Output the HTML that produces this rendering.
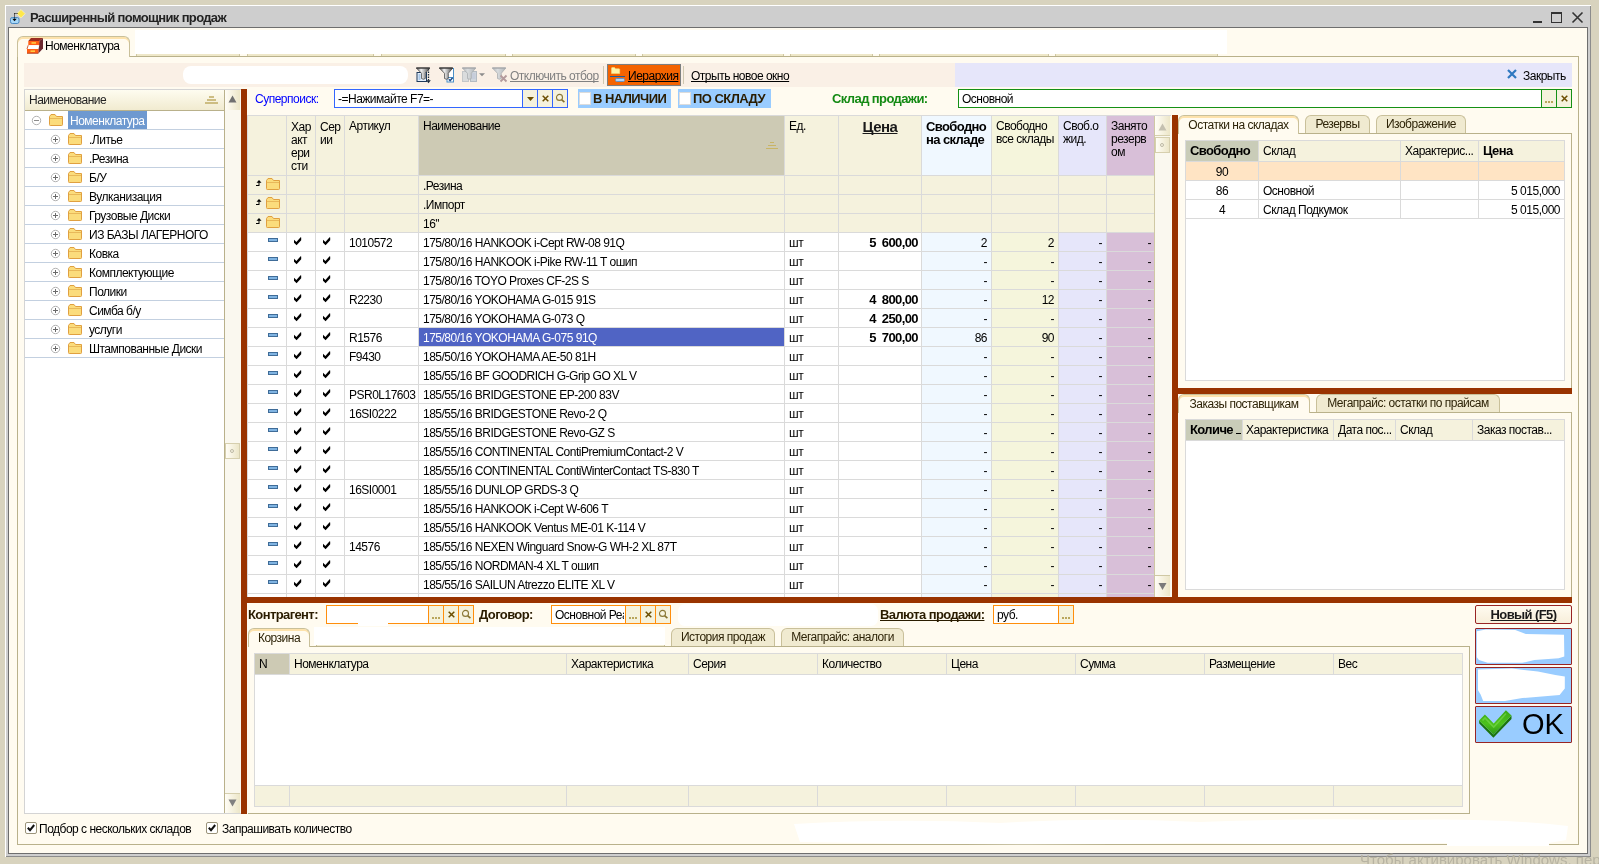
<!DOCTYPE html>
<html lang="ru"><head><meta charset="utf-8"><title>Расширенный помощник продаж</title>
<style>
html,body{margin:0;padding:0}
body{width:1599px;height:864px;background:#d8d3be;position:relative;overflow:hidden;
 font:12px "Liberation Sans",sans-serif;letter-spacing:-0.5px;color:#000}
div{position:absolute;box-sizing:border-box;text-decoration-skip-ink:none}
.t{white-space:nowrap;line-height:19px;height:19px}
.b{font-weight:bold;font-size:13px;letter-spacing:-0.6px}
.u{text-decoration:underline}
svg{position:absolute;overflow:visible}
.tab{background:#f0ead0;border:1px solid #c9c09a;border-bottom:none;border-radius:6px 6px 0 0;text-align:center;line-height:17px;white-space:nowrap;color:#2e2408}
.tabA{background:#fffbf0;border:1px solid #c9c09a;border-bottom:none;box-shadow:inset 0 2px 0 #fde2ab;border-radius:6px 6px 0 0;text-align:center;white-space:nowrap;color:#2e2408}
.btn{background:#f5f2d8;text-align:center;line-height:14px;color:#7a5a00;font-weight:bold}
#w{left:0;top:0;width:1599px;height:864px;will-change:transform}
</style></head><body><div id="w">

<div style="left:5px;top:5px;width:1586px;height:852px;background:#fff"></div>
<div style="left:6px;top:6px;width:1585px;height:851px;background:#8c8c8c"></div>
<div style="left:6px;top:6px;width:1584px;height:850px;background:#cecece"></div>
<div style="left:8px;top:27px;width:1580px;height:827px;background:#707070"></div>
<div style="left:9px;top:28px;width:1578px;height:825px;background:#fffbf0"></div>
<div style="left:8px;top:27px;width:1580px;height:827px;background:#6e6e6e"></div>
<div style="left:9px;top:28px;width:1578px;height:825px;background:#fffbf0"></div>
<svg style="left:9px;top:8px" width="18" height="18" viewBox="0 0 18 18"><path d="M12 1.500L16.200 5.700L12 9.900L7.800 5.700z" fill="#ffe84a" stroke="#f4f0c8" stroke-width=".8"/><rect x="1.500" y="9.500" width="8.500" height="6" rx="1.800" fill="#a8d8f8" stroke="#4a8ac4"/><path d="M5.500 5.500v6" stroke="#000" stroke-dasharray="1 1"/><path d="M5.500 5.500h3" stroke="#000" stroke-dasharray="1 1"/><path d="M3.300 10.800h4.400L5.500 13.300z" fill="#000"/></svg>
<div class="t" style="left:30px;top:8px;font-weight:bold;font-size:13px;color:#222;letter-spacing:-0.65px">Расширенный помощник продаж</div>
<div style="left:1533px;top:21px;width:9px;height:2px;background:#333"></div>
<div style="left:1551px;top:12px;width:11px;height:11px;border:1px solid #333;border-top:2px solid #333"></div>
<svg style="left:1572px;top:12px" width="11" height="11" viewBox="0 0 11 11"><path d="M.5 .5l10 10M10.5 .5l-10 10" stroke="#333" stroke-width="1.6" fill="none"/></svg>
<div style="left:17px;top:56px;width:1562px;height:789px;border:1px solid #b9b18b;background:#fffbf0"></div>
<div style="left:135px;top:30px;width:1092px;height:24px;background:#fff"></div>
<div style="left:136px;top:54px;width:104px;height:2px;background:#eee7c8;border-left:1px solid #cfc7a2;border-right:1px solid #cfc7a2"></div>
<div style="left:247px;top:54px;width:127px;height:2px;background:#eee7c8;border-left:1px solid #cfc7a2;border-right:1px solid #cfc7a2"></div>
<div style="left:381px;top:54px;width:125px;height:2px;background:#eee7c8;border-left:1px solid #cfc7a2;border-right:1px solid #cfc7a2"></div>
<div style="left:512px;top:54px;width:124px;height:2px;background:#eee7c8;border-left:1px solid #cfc7a2;border-right:1px solid #cfc7a2"></div>
<div style="left:642px;top:54px;width:142px;height:2px;background:#eee7c8;border-left:1px solid #cfc7a2;border-right:1px solid #cfc7a2"></div>
<div style="left:790px;top:54px;width:83px;height:2px;background:#eee7c8;border-left:1px solid #cfc7a2;border-right:1px solid #cfc7a2"></div>
<div style="left:879px;top:54px;width:170px;height:2px;background:#eee7c8;border-left:1px solid #cfc7a2;border-right:1px solid #cfc7a2"></div>
<div style="left:1055px;top:54px;width:163px;height:2px;background:#eee7c8;border-left:1px solid #cfc7a2;border-right:1px solid #cfc7a2"></div>
<div style="left:129px;top:56px;width:1450px;height:1px;background:#b9b18b"></div>
<div style="left:17px;top:36px;width:113px;height:21px;background:#fffbf0;border:1px solid #c9c09a;border-bottom:none;box-shadow:inset 0 2px 0 #fde2ab;border-radius:6px 6px 0 0"></div>
<svg style="left:27px;top:38px" width="16" height="16" viewBox="0 0 16 16"><path d="M1.300 3L4 0H16L12.300 3z" fill="#9a2c20"/><path d="M12.300 3L16 0V10.500L11.300 15.500V11z" fill="#6e2a30"/><rect x="1.300" y="3" width="11" height="4.200" fill="#ff5f14"/><path d="M1.200 7.200H12.300L11.300 11H0z" fill="#fff"/><path d="M1.200 7.200L0 11" stroke="#c03a10" stroke-width=".8"/><rect x="0" y="11" width="11.300" height="4.300" fill="#ff5f14"/><path d="M0 15.300h11.300" stroke="#a83a18" stroke-width=".8"/><rect x="4.500" y="4.300" width="4.500" height="1.300" fill="#ffe44d"/><rect x="3.500" y="12.500" width="4.500" height="1.300" fill="#ffe44d"/></svg>
<div class="t" style="left:45px;top:37px;">Номенклатура</div>
<div style="left:24px;top:63px;width:931px;height:24px;background:#faf0e6"></div>
<div style="left:955px;top:63px;width:617px;height:24px;background:#e6e6fa"></div>
<div style="left:183px;top:66px;width:225px;height:18px;background:#fff;border-radius:8px"></div>
<svg width="0" height="0" style="left:0;top:0"><defs><linearGradient id="fm" x1="0" y1="0" x2="1" y2="0"><stop offset="0" stop-color="#4a4a4a"/><stop offset=".35" stop-color="#f2f2f2"/><stop offset=".6" stop-color="#b5b5b5"/><stop offset="1" stop-color="#3c3c3c"/></linearGradient><linearGradient id="fg" x1="0" y1="0" x2="1" y2="0"><stop offset="0" stop-color="#b4b8bb"/><stop offset=".4" stop-color="#d9dcde"/><stop offset="1" stop-color="#aeb2b5"/></linearGradient></defs></svg>
<svg style="left:416px;top:67px" width="16" height="16" viewBox="0 0 16 16"><rect x="1" y="5.500" width="9.500" height="9" fill="#e6f0fb" stroke="#1e3a5c"/><path d="M2.500 8h2M2.500 10h2M2.500 12h2" stroke="#6d9fd6"/><path d="M12.500 2v12" stroke="#1c2c3c" stroke-width="1.300" stroke-dasharray="1.500 1"/><path d="M10.200 13.300h4.600l-2.300 3z" fill="#1c2c3c"/></svg>
<svg style="left:416px;top:67px" width="16" height="16" viewBox="0 0 16 16"><path d="M0.300 1H13.800L9.300 6.300V11.500Q7.400 13 5.500 11.500V6.300z" fill="url(#fm)" stroke="#3a3a3a" stroke-width=".7" stroke-linejoin="round"/><path d="M0.300 1H13.800" stroke="#3a3a3a" stroke-width="1.200"/></svg>
<svg style="left:439px;top:67px" width="16" height="16" viewBox="0 0 16 16"><rect x="8" y="1.500" width="6.500" height="13.500" fill="#fff" stroke="#4a90c8"/><path d="M9 10.500h5" stroke="#4a90c8"/><path d="M9.800 12.300l1.300 1.400 2.500-3" stroke="#1f4e8c" fill="none" stroke-width="1.500"/></svg>
<svg style="left:439px;top:67px" width="16" height="16" viewBox="0 0 16 16"><path d="M0.300 1H13.800L9.300 6.300V11.500Q7.400 13 5.500 11.500V6.300z" fill="url(#fm)" stroke="#3a3a3a" stroke-width=".7" stroke-linejoin="round"/><path d="M0.300 1H13.800" stroke="#3a3a3a" stroke-width="1.200"/></svg>
<svg style="left:462px;top:67px" width="24" height="16" viewBox="0 0 24 16"><rect x=".5" y="4.500" width="6" height="10" fill="#dadcdd" stroke="#c4c7c9"/><rect x="8.500" y="4.500" width="6" height="10" fill="#d0d6dc" stroke="#b4bbc2"/><path d="M10 7h3.500M10 9h3.500M10 11h3.500" stroke="#b9c0d8" stroke-width=".8"/><path d="M17 6.200h6l-3 3z" fill="#8c8c8c"/></svg>
<svg style="left:462px;top:67px" width="16" height="16" viewBox="0 0 16 16"><path d="M0.300 1H13.800L9.300 6.300V11.500Q7.400 13 5.500 11.500V6.300z" fill="url(#fg)" stroke="#a4a8ab" stroke-width=".7" stroke-linejoin="round"/><path d="M0.300 1H13.800" stroke="#a4a8ab" stroke-width="1.200"/></svg>
<svg style="left:492px;top:67px" width="16" height="16" viewBox="0 0 16 16"><path d="M0.300 1H13.800L9.300 6.300V11.500Q7.400 13 5.500 11.500V6.300z" fill="url(#fg)" stroke="#a4a8ab" stroke-width=".7" stroke-linejoin="round"/><path d="M0.300 1H13.800" stroke="#a4a8ab" stroke-width="1.200"/></svg>
<svg style="left:492px;top:67px" width="16" height="16" viewBox="0 0 16 16"><path d="M8.500 8.500l6 6M14.500 8.500l-6 6" stroke="#b49a9c" stroke-width="1.800"/></svg>
<div class="t" style="left:510px;top:67px;color:#808080;text-decoration:underline">Отключить отбор</div>
<div style="left:603px;top:66px;width:1px;height:18px;background:#cfc8b0"></div>
<div style="left:607px;top:64px;width:74px;height:22px;background:#f46300;border:1px solid #7c7f80"></div>
<svg style="left:610px;top:67px" width="16" height="16" viewBox="0 0 16 16"><path d="M1.500 1.200Q1.500 .5 2.200 .5H4.500L5.500 1.800H9Q9.700 1.800 9.700 2.500V6.500H1.500z" fill="#fff3a8" stroke="#f0dc80" stroke-width=".6"/><path d="M0 9.500h15" stroke="#1f5a9a" stroke-width="1"/><rect x="5.500" y="11.500" width="9" height="3" rx="1.200" fill="#b4d4f2" stroke="#5a8fc8" stroke-width=".9"/></svg>
<div class="t" style="left:628px;top:67px;text-decoration:underline">Иерархия</div>
<div style="left:683px;top:66px;width:1px;height:18px;background:#cfc8b0"></div>
<div class="t" style="left:691px;top:67px;text-decoration:underline">Отрыть новое окно</div>
<svg style="left:1507px;top:69px" width="10" height="10" viewBox="0 0 10 10"><path d="M1 1l8 8M9 1l-8 8" stroke="#2f78c0" stroke-width="2.2"/></svg>
<div class="t" style="left:1523px;top:67px;">Закрыть</div>
<div style="left:24px;top:89px;width:217px;height:725px;background:#fff;border:1px solid #d4d4d4"></div>
<div style="left:25px;top:90px;width:199px;height:20px;background:linear-gradient(#fefcf0,#f1ebd0)"></div>
<div style="left:25px;top:110px;width:216px;height:1px;background:#b9b18b"></div>
<div style="left:224px;top:90px;width:1px;height:723px;background:#b9b18b"></div>
<div style="left:225px;top:90px;width:16px;height:723px;background:#faf8ef"></div>
<div style="left:225px;top:90px;width:15px;height:20px;background:linear-gradient(90deg,#fffdf6,#ece6c8)"></div>
<div class="t" style="left:29px;top:91px;color:#222">Наименование</div>
<div style="left:209px;top:96px;width:5px;height:2px;background:#cdbd82"></div>
<div style="left:207px;top:99px;width:9px;height:2px;background:#cdbd82"></div>
<div style="left:205px;top:102px;width:13px;height:2px;background:#cdbd82"></div>
<svg style="left:228px;top:95px" width="9" height="8" viewBox="0 0 9 8"><path d="M4.5 0.5L8.5 7.5H0.5z" fill="#707070"/></svg>
<div style="left:225px;top:443px;width:15px;height:16px;background:linear-gradient(90deg,#fffdf6,#ece6c8);border:1px solid #d6cfae"></div>
<div style="left:230px;top:449px;width:4px;height:4px;border:1px solid #bdb9a5;border-radius:2px"></div>
<div style="left:225px;top:793px;width:15px;height:20px;background:linear-gradient(90deg,#fffdf6,#ece6c8);border-top:1px solid #d6cfae"></div>
<svg style="left:228px;top:799px" width="9" height="8" viewBox="0 0 9 8"><path d="M0.5 0.5H8.5L4.5 7.5z" fill="#808080"/></svg>
<div style="left:25px;top:129px;width:199px;height:1px;background:#c3d0e0"></div>
<svg style="left:31px;top:115px" width="11" height="11" viewBox="0 0 11 11"><circle cx="5.500" cy="5.500" r="4.200" fill="#fff" stroke="#b2b2b2"/><path d="M3 5.500h5" stroke="#8c8c8c" fill="none"/></svg>
<svg style="left:49px;top:114px" width="14" height="12" viewBox="0 0 14 12"><path d="M.5 10.5v-8l1.5-2h4l1.5 2h6v8.2q0 .8-.8.8H1.300q-.8 0-.8-.8z" fill="#fbdc7c" stroke="#e0a040"/><path d="M1 4.5h12" stroke="#e8b85a"/></svg>
<div style="left:68px;top:111px;width:79px;height:18px;background:#6e99d0"></div>
<div class="t" style="left:70px;top:112px;color:#fff">Номенклатура</div>
<div style="left:25px;top:148px;width:199px;height:1px;background:#c3d0e0"></div>
<svg style="left:50px;top:134px" width="11" height="11" viewBox="0 0 11 11"><circle cx="5.500" cy="5.500" r="4.200" fill="#fff" stroke="#b2b2b2"/><path d="M3 5.500h5M5.500 3v5" stroke="#6a6a6a" fill="none"/></svg>
<svg style="left:68px;top:133px" width="14" height="12" viewBox="0 0 14 12"><path d="M.5 10.5v-8l1.5-2h4l1.5 2h6v8.2q0 .8-.8.8H1.300q-.8 0-.8-.8z" fill="#fbdc7c" stroke="#e0a040"/><path d="M1 4.5h12" stroke="#e8b85a"/></svg>
<div class="t" style="left:89px;top:131px;">.Литье</div>
<div style="left:25px;top:167px;width:199px;height:1px;background:#c3d0e0"></div>
<svg style="left:50px;top:153px" width="11" height="11" viewBox="0 0 11 11"><circle cx="5.500" cy="5.500" r="4.200" fill="#fff" stroke="#b2b2b2"/><path d="M3 5.500h5M5.500 3v5" stroke="#6a6a6a" fill="none"/></svg>
<svg style="left:68px;top:152px" width="14" height="12" viewBox="0 0 14 12"><path d="M.5 10.5v-8l1.5-2h4l1.5 2h6v8.2q0 .8-.8.8H1.300q-.8 0-.8-.8z" fill="#fbdc7c" stroke="#e0a040"/><path d="M1 4.5h12" stroke="#e8b85a"/></svg>
<div class="t" style="left:89px;top:150px;">.Резина</div>
<div style="left:25px;top:186px;width:199px;height:1px;background:#c3d0e0"></div>
<svg style="left:50px;top:172px" width="11" height="11" viewBox="0 0 11 11"><circle cx="5.500" cy="5.500" r="4.200" fill="#fff" stroke="#b2b2b2"/><path d="M3 5.500h5M5.500 3v5" stroke="#6a6a6a" fill="none"/></svg>
<svg style="left:68px;top:171px" width="14" height="12" viewBox="0 0 14 12"><path d="M.5 10.5v-8l1.5-2h4l1.5 2h6v8.2q0 .8-.8.8H1.300q-.8 0-.8-.8z" fill="#fbdc7c" stroke="#e0a040"/><path d="M1 4.5h12" stroke="#e8b85a"/></svg>
<div class="t" style="left:89px;top:169px;">Б/У</div>
<div style="left:25px;top:205px;width:199px;height:1px;background:#c3d0e0"></div>
<svg style="left:50px;top:191px" width="11" height="11" viewBox="0 0 11 11"><circle cx="5.500" cy="5.500" r="4.200" fill="#fff" stroke="#b2b2b2"/><path d="M3 5.500h5M5.500 3v5" stroke="#6a6a6a" fill="none"/></svg>
<svg style="left:68px;top:190px" width="14" height="12" viewBox="0 0 14 12"><path d="M.5 10.5v-8l1.5-2h4l1.5 2h6v8.2q0 .8-.8.8H1.300q-.8 0-.8-.8z" fill="#fbdc7c" stroke="#e0a040"/><path d="M1 4.5h12" stroke="#e8b85a"/></svg>
<div class="t" style="left:89px;top:188px;">Вулканизация</div>
<div style="left:25px;top:224px;width:199px;height:1px;background:#c3d0e0"></div>
<svg style="left:50px;top:210px" width="11" height="11" viewBox="0 0 11 11"><circle cx="5.500" cy="5.500" r="4.200" fill="#fff" stroke="#b2b2b2"/><path d="M3 5.500h5M5.500 3v5" stroke="#6a6a6a" fill="none"/></svg>
<svg style="left:68px;top:209px" width="14" height="12" viewBox="0 0 14 12"><path d="M.5 10.5v-8l1.5-2h4l1.5 2h6v8.2q0 .8-.8.8H1.300q-.8 0-.8-.8z" fill="#fbdc7c" stroke="#e0a040"/><path d="M1 4.5h12" stroke="#e8b85a"/></svg>
<div class="t" style="left:89px;top:207px;">Грузовые Диски</div>
<div style="left:25px;top:243px;width:199px;height:1px;background:#c3d0e0"></div>
<svg style="left:50px;top:229px" width="11" height="11" viewBox="0 0 11 11"><circle cx="5.500" cy="5.500" r="4.200" fill="#fff" stroke="#b2b2b2"/><path d="M3 5.500h5M5.500 3v5" stroke="#6a6a6a" fill="none"/></svg>
<svg style="left:68px;top:228px" width="14" height="12" viewBox="0 0 14 12"><path d="M.5 10.5v-8l1.5-2h4l1.5 2h6v8.2q0 .8-.8.8H1.300q-.8 0-.8-.8z" fill="#fbdc7c" stroke="#e0a040"/><path d="M1 4.5h12" stroke="#e8b85a"/></svg>
<div class="t" style="left:89px;top:226px;">ИЗ БАЗЫ ЛАГЕРНОГО</div>
<div style="left:25px;top:262px;width:199px;height:1px;background:#c3d0e0"></div>
<svg style="left:50px;top:248px" width="11" height="11" viewBox="0 0 11 11"><circle cx="5.500" cy="5.500" r="4.200" fill="#fff" stroke="#b2b2b2"/><path d="M3 5.500h5M5.500 3v5" stroke="#6a6a6a" fill="none"/></svg>
<svg style="left:68px;top:247px" width="14" height="12" viewBox="0 0 14 12"><path d="M.5 10.5v-8l1.5-2h4l1.5 2h6v8.2q0 .8-.8.8H1.300q-.8 0-.8-.8z" fill="#fbdc7c" stroke="#e0a040"/><path d="M1 4.5h12" stroke="#e8b85a"/></svg>
<div class="t" style="left:89px;top:245px;">Ковка</div>
<div style="left:25px;top:281px;width:199px;height:1px;background:#c3d0e0"></div>
<svg style="left:50px;top:267px" width="11" height="11" viewBox="0 0 11 11"><circle cx="5.500" cy="5.500" r="4.200" fill="#fff" stroke="#b2b2b2"/><path d="M3 5.500h5M5.500 3v5" stroke="#6a6a6a" fill="none"/></svg>
<svg style="left:68px;top:266px" width="14" height="12" viewBox="0 0 14 12"><path d="M.5 10.5v-8l1.5-2h4l1.5 2h6v8.2q0 .8-.8.8H1.300q-.8 0-.8-.8z" fill="#fbdc7c" stroke="#e0a040"/><path d="M1 4.5h12" stroke="#e8b85a"/></svg>
<div class="t" style="left:89px;top:264px;">Комплектующие</div>
<div style="left:25px;top:300px;width:199px;height:1px;background:#c3d0e0"></div>
<svg style="left:50px;top:286px" width="11" height="11" viewBox="0 0 11 11"><circle cx="5.500" cy="5.500" r="4.200" fill="#fff" stroke="#b2b2b2"/><path d="M3 5.500h5M5.500 3v5" stroke="#6a6a6a" fill="none"/></svg>
<svg style="left:68px;top:285px" width="14" height="12" viewBox="0 0 14 12"><path d="M.5 10.5v-8l1.5-2h4l1.5 2h6v8.2q0 .8-.8.8H1.300q-.8 0-.8-.8z" fill="#fbdc7c" stroke="#e0a040"/><path d="M1 4.5h12" stroke="#e8b85a"/></svg>
<div class="t" style="left:89px;top:283px;">Полики</div>
<div style="left:25px;top:319px;width:199px;height:1px;background:#c3d0e0"></div>
<svg style="left:50px;top:305px" width="11" height="11" viewBox="0 0 11 11"><circle cx="5.500" cy="5.500" r="4.200" fill="#fff" stroke="#b2b2b2"/><path d="M3 5.500h5M5.500 3v5" stroke="#6a6a6a" fill="none"/></svg>
<svg style="left:68px;top:304px" width="14" height="12" viewBox="0 0 14 12"><path d="M.5 10.5v-8l1.5-2h4l1.5 2h6v8.2q0 .8-.8.8H1.300q-.8 0-.8-.8z" fill="#fbdc7c" stroke="#e0a040"/><path d="M1 4.5h12" stroke="#e8b85a"/></svg>
<div class="t" style="left:89px;top:302px;">Симба б/у</div>
<div style="left:25px;top:338px;width:199px;height:1px;background:#c3d0e0"></div>
<svg style="left:50px;top:324px" width="11" height="11" viewBox="0 0 11 11"><circle cx="5.500" cy="5.500" r="4.200" fill="#fff" stroke="#b2b2b2"/><path d="M3 5.500h5M5.500 3v5" stroke="#6a6a6a" fill="none"/></svg>
<svg style="left:68px;top:323px" width="14" height="12" viewBox="0 0 14 12"><path d="M.5 10.5v-8l1.5-2h4l1.5 2h6v8.2q0 .8-.8.8H1.300q-.8 0-.8-.8z" fill="#fbdc7c" stroke="#e0a040"/><path d="M1 4.5h12" stroke="#e8b85a"/></svg>
<div class="t" style="left:89px;top:321px;">услуги</div>
<div style="left:25px;top:357px;width:199px;height:1px;background:#c3d0e0"></div>
<svg style="left:50px;top:343px" width="11" height="11" viewBox="0 0 11 11"><circle cx="5.500" cy="5.500" r="4.200" fill="#fff" stroke="#b2b2b2"/><path d="M3 5.500h5M5.500 3v5" stroke="#6a6a6a" fill="none"/></svg>
<svg style="left:68px;top:342px" width="14" height="12" viewBox="0 0 14 12"><path d="M.5 10.5v-8l1.5-2h4l1.5 2h6v8.2q0 .8-.8.8H1.300q-.8 0-.8-.8z" fill="#fbdc7c" stroke="#e0a040"/><path d="M1 4.5h12" stroke="#e8b85a"/></svg>
<div class="t" style="left:89px;top:340px;">Штампованные Диски</div>
<div style="left:241px;top:89px;width:6px;height:725px;background:#993300"></div>
<div style="left:1172px;top:115px;width:6px;height:488px;background:#993300"></div>
<div style="left:241px;top:597px;width:1331px;height:6px;background:#993300"></div>
<div style="left:1178px;top:388px;width:394px;height:6px;background:#993300"></div>
<div class="t" style="left:255px;top:90px;color:#0000ff">Суперпоиск:</div>
<div style="left:334px;top:89px;width:234px;height:19px;background:#fff;border:1px solid #3366ff"></div>
<div style="left:522px;top:90px;width:15px;height:17px;background:#f5f2dd;border-left:1px solid #3366ff"></div>
<svg style="left:527px;top:97px" width="7" height="4" viewBox="0 0 7 4"><path d="M0 0h7L3.5 4z" fill="#6b4e00"/></svg>
<div style="left:537px;top:90px;width:15px;height:17px;background:#f5f2dd;border-left:1px solid #3366ff"></div>
<svg style="left:542px;top:95px" width="7" height="7" viewBox="0 0 7 7"><path d="M.7 .7l5.6 5.6M6.300 .7l-5.600 5.600" stroke="#6b4e00" stroke-width="1.500"/></svg>
<div style="left:552px;top:90px;width:15px;height:17px;background:#f5f2dd;border-left:1px solid #3366ff"></div>
<svg style="left:556px;top:94px" width="9" height="9" viewBox="0 0 9 9"><circle cx="3.500" cy="3.400" r="3" fill="#f8f5e2" stroke="#8a7836" stroke-width="1.100"/><path d="M5.800 5.800l2.600 2.400" stroke="#85702a" stroke-width="1.600"/></svg>
<div class="t" style="left:338px;top:90px;">-=Нажимайте F7=-</div>
<div style="left:578px;top:89px;width:93px;height:19px;background:#99ccff"></div>
<div style="left:579px;top:92px;width:12px;height:13px;background:#fff;border:1px solid #dcdcdc"></div>
<div class="t" style="left:593px;top:89px;font-weight:bold;font-size:13px;color:#2a1c00;letter-spacing:-0.55px">В НАЛИЧИИ</div>
<div style="left:678px;top:89px;width:93px;height:19px;background:#99ccff"></div>
<div style="left:679px;top:92px;width:12px;height:13px;background:#fff;border:1px solid #dcdcdc"></div>
<div class="t" style="left:693px;top:89px;font-weight:bold;font-size:13px;color:#2a1c00;letter-spacing:-0.55px">ПО СКЛАДУ</div>
<div class="t" style="left:832px;top:89px;font-weight:bold;font-size:13px;letter-spacing:-0.6px;color:#148a14">Склад продажи:</div>
<div style="left:958px;top:89px;width:614px;height:19px;background:#fff;border:1px solid #159015"></div>
<div style="left:1541px;top:90px;width:15px;height:17px;background:#f5f2dd;border-left:1px solid #159015"></div>
<div style="left:1545px;top:101px;width:2px;height:2px;background:#b9a65c"></div>
<div style="left:1548px;top:101px;width:2px;height:2px;background:#b9a65c"></div>
<div style="left:1551px;top:101px;width:2px;height:2px;background:#b9a65c"></div>
<div style="left:1556px;top:90px;width:15px;height:17px;background:#f5f2dd;border-left:1px solid #159015"></div>
<svg style="left:1561px;top:95px" width="7" height="7" viewBox="0 0 7 7"><path d="M.7 .7l5.6 5.6M6.300 .7l-5.600 5.600" stroke="#6b4e00" stroke-width="1.500"/></svg>
<div class="t" style="left:962px;top:90px;">Основной</div>
<div style="left:247px;top:115px;width:924px;height:482px;background:#fff;border-top:1px solid #dadada;border-left:1px solid #dadada"></div>
<div style="left:248px;top:116px;width:907px;height:59px;background:#f5f2dd"></div>
<div style="left:419px;top:116px;width:365px;height:59px;background:#cdcab4"></div>
<div style="left:922px;top:116px;width:69px;height:59px;background:#f0f8ff"></div>
<div style="left:992px;top:116px;width:66px;height:59px;background:#f5f5dc"></div>
<div style="left:1059px;top:116px;width:47px;height:59px;background:#e6e6fa"></div>
<div style="left:1107px;top:116px;width:47px;height:59px;background:#d8bfd8"></div>
<div style="left:248px;top:176px;width:907px;height:56px;background:#f5f2dd"></div>
<div style="left:922px;top:233px;width:69px;height:364px;background:#f0f8ff"></div>
<div style="left:992px;top:233px;width:66px;height:364px;background:#f5f5dc"></div>
<div style="left:1059px;top:233px;width:47px;height:364px;background:#e6e6fa"></div>
<div style="left:1107px;top:233px;width:47px;height:364px;background:#d8bfd8"></div>
<div style="left:248px;top:175px;width:907px;height:1px;background:#dadada"></div>
<div style="left:248px;top:194px;width:907px;height:1px;background:#dadada"></div>
<div style="left:248px;top:213px;width:907px;height:1px;background:#dadada"></div>
<div style="left:248px;top:232px;width:907px;height:1px;background:#dadada"></div>
<div style="left:248px;top:251px;width:907px;height:1px;background:#dadada"></div>
<div style="left:248px;top:270px;width:907px;height:1px;background:#dadada"></div>
<div style="left:248px;top:289px;width:907px;height:1px;background:#dadada"></div>
<div style="left:248px;top:308px;width:907px;height:1px;background:#dadada"></div>
<div style="left:248px;top:327px;width:907px;height:1px;background:#dadada"></div>
<div style="left:248px;top:346px;width:907px;height:1px;background:#dadada"></div>
<div style="left:248px;top:365px;width:907px;height:1px;background:#dadada"></div>
<div style="left:248px;top:384px;width:907px;height:1px;background:#dadada"></div>
<div style="left:248px;top:403px;width:907px;height:1px;background:#dadada"></div>
<div style="left:248px;top:422px;width:907px;height:1px;background:#dadada"></div>
<div style="left:248px;top:441px;width:907px;height:1px;background:#dadada"></div>
<div style="left:248px;top:460px;width:907px;height:1px;background:#dadada"></div>
<div style="left:248px;top:479px;width:907px;height:1px;background:#dadada"></div>
<div style="left:248px;top:498px;width:907px;height:1px;background:#dadada"></div>
<div style="left:248px;top:517px;width:907px;height:1px;background:#dadada"></div>
<div style="left:248px;top:536px;width:907px;height:1px;background:#dadada"></div>
<div style="left:248px;top:555px;width:907px;height:1px;background:#dadada"></div>
<div style="left:248px;top:574px;width:907px;height:1px;background:#dadada"></div>
<div style="left:248px;top:593px;width:907px;height:1px;background:#dadada"></div>
<div style="left:286px;top:116px;width:1px;height:481px;background:#dadada"></div>
<div style="left:315px;top:116px;width:1px;height:481px;background:#dadada"></div>
<div style="left:344px;top:116px;width:1px;height:481px;background:#dadada"></div>
<div style="left:418px;top:116px;width:1px;height:481px;background:#dadada"></div>
<div style="left:784px;top:116px;width:1px;height:481px;background:#dadada"></div>
<div style="left:838px;top:116px;width:1px;height:481px;background:#dadada"></div>
<div style="left:921px;top:116px;width:1px;height:481px;background:#dadada"></div>
<div style="left:991px;top:116px;width:1px;height:481px;background:#dadada"></div>
<div style="left:1058px;top:116px;width:1px;height:481px;background:#dadada"></div>
<div style="left:1106px;top:116px;width:1px;height:481px;background:#dadada"></div>
<div style="left:1154px;top:116px;width:1px;height:481px;background:#dadada"></div>
<div class="t" style="left:291px;top:121px;line-height:13px;height:auto;white-space:pre;">Хар
акт
ери
сти</div>
<div class="t" style="left:320px;top:121px;line-height:13px;height:auto;white-space:pre;">Сер
ии</div>
<div class="t" style="left:349px;top:117px;">Артикул</div>
<div class="t" style="left:423px;top:117px;">Наименование</div>
<div style="left:770px;top:142px;width:4px;height:1px;background:#c9b465"></div>
<div style="left:768px;top:145px;width:8px;height:1px;background:#c9b465"></div>
<div style="left:766px;top:148px;width:12px;height:1px;background:#c9b465"></div>
<div class="t" style="left:789px;top:117px;">Ед.</div>
<div class="t" style="left:839px;top:117px;width:82px;text-align:center;font-weight:bold;font-size:15px;letter-spacing:-0.5px;text-decoration:underline;color:#1a1a1a;line-height:20px">Цена</div>
<div class="t" style="left:926px;top:120px;line-height:13px;height:auto;white-space:pre;font-weight:bold;font-size:13px;letter-spacing:-0.6px">Свободно
на складе</div>
<div class="t" style="left:996px;top:120px;line-height:13px;height:auto;white-space:pre;">Свободно
все склады</div>
<div class="t" style="left:1063px;top:120px;line-height:13px;height:auto;white-space:pre;">Своб.о
жид.</div>
<div class="t" style="left:1111px;top:120px;line-height:13px;height:auto;white-space:pre;">Занято
резерв
ом</div>
<svg style="left:256px;top:180px" width="6" height="6" viewBox="0 0 6 6"><path d="M3 0L5.500 2.700H3.500V6H0V5H2.500V2.700H0.500z" fill="#000"/></svg>
<svg style="left:266px;top:178px" width="14" height="12" viewBox="0 0 14 12"><path d="M.5 10.5v-8l1.5-2h4l1.5 2h6v8.2q0 .8-.8.8H1.300q-.8 0-.8-.8z" fill="#fbdc7c" stroke="#e0a040"/><path d="M1 4.5h12" stroke="#e8b85a"/></svg>
<div class="t" style="left:423px;top:177px;">.Резина</div>
<svg style="left:256px;top:199px" width="6" height="6" viewBox="0 0 6 6"><path d="M3 0L5.500 2.700H3.500V6H0V5H2.500V2.700H0.500z" fill="#000"/></svg>
<svg style="left:266px;top:197px" width="14" height="12" viewBox="0 0 14 12"><path d="M.5 10.5v-8l1.5-2h4l1.5 2h6v8.2q0 .8-.8.8H1.300q-.8 0-.8-.8z" fill="#fbdc7c" stroke="#e0a040"/><path d="M1 4.5h12" stroke="#e8b85a"/></svg>
<div class="t" style="left:423px;top:196px;">.Импорт</div>
<svg style="left:256px;top:218px" width="6" height="6" viewBox="0 0 6 6"><path d="M3 0L5.500 2.700H3.500V6H0V5H2.500V2.700H0.500z" fill="#000"/></svg>
<svg style="left:266px;top:216px" width="14" height="12" viewBox="0 0 14 12"><path d="M.5 10.5v-8l1.5-2h4l1.5 2h6v8.2q0 .8-.8.8H1.300q-.8 0-.8-.8z" fill="#fbdc7c" stroke="#e0a040"/><path d="M1 4.5h12" stroke="#e8b85a"/></svg>
<div class="t" style="left:423px;top:215px;">16''</div>
<div style="left:268px;top:238px;width:10px;height:4px;background:#80b4e2;border:1px solid #3f6c98"></div>
<svg style="left:294px;top:237px" width="8" height="9" viewBox="0 0 8 9"><path d="M0 2.800L2.400 5L6.600 0.300L7.200 0.600V3.200L2.600 8.200L0 5.800z" fill="#000"/></svg>
<svg style="left:323px;top:237px" width="8" height="9" viewBox="0 0 8 9"><path d="M0 2.800L2.400 5L6.600 0.300L7.200 0.600V3.200L2.600 8.200L0 5.800z" fill="#000"/></svg>
<div class="t" style="left:349px;top:234px;">1010572</div>
<div class="t" style="left:423px;top:234px;">175/80/16 HANKOOK i-Cept RW-08 91Q</div>
<div class="t" style="left:789px;top:234px;">шт</div>
<div class="t" style="left:839px;top:233px;width:79px;text-align:right;font-weight:bold;font-size:13px;letter-spacing:-0.6px;word-spacing:3px">5 600,00</div>
<div class="t" style="left:922px;top:234px;width:65px;text-align:right">2</div>
<div class="t" style="left:992px;top:234px;width:62px;text-align:right">2</div>
<div class="t" style="left:1059px;top:234px;width:43px;text-align:right">-</div>
<div class="t" style="left:1107px;top:234px;width:44px;text-align:right">-</div>
<div style="left:268px;top:257px;width:10px;height:4px;background:#80b4e2;border:1px solid #3f6c98"></div>
<svg style="left:294px;top:256px" width="8" height="9" viewBox="0 0 8 9"><path d="M0 2.800L2.400 5L6.600 0.300L7.200 0.600V3.200L2.600 8.200L0 5.800z" fill="#000"/></svg>
<svg style="left:323px;top:256px" width="8" height="9" viewBox="0 0 8 9"><path d="M0 2.800L2.400 5L6.600 0.300L7.200 0.600V3.200L2.600 8.200L0 5.800z" fill="#000"/></svg>
<div class="t" style="left:423px;top:253px;">175/80/16 HANKOOK i-Pike RW-11 T ошип</div>
<div class="t" style="left:789px;top:253px;">шт</div>
<div class="t" style="left:922px;top:253px;width:65px;text-align:right">-</div>
<div class="t" style="left:992px;top:253px;width:62px;text-align:right">-</div>
<div class="t" style="left:1059px;top:253px;width:43px;text-align:right">-</div>
<div class="t" style="left:1107px;top:253px;width:44px;text-align:right">-</div>
<div style="left:268px;top:276px;width:10px;height:4px;background:#80b4e2;border:1px solid #3f6c98"></div>
<svg style="left:294px;top:275px" width="8" height="9" viewBox="0 0 8 9"><path d="M0 2.800L2.400 5L6.600 0.300L7.200 0.600V3.200L2.600 8.200L0 5.800z" fill="#000"/></svg>
<svg style="left:323px;top:275px" width="8" height="9" viewBox="0 0 8 9"><path d="M0 2.800L2.400 5L6.600 0.300L7.200 0.600V3.200L2.600 8.200L0 5.800z" fill="#000"/></svg>
<div class="t" style="left:423px;top:272px;">175/80/16 TOYO Proxes CF-2S S</div>
<div class="t" style="left:789px;top:272px;">шт</div>
<div class="t" style="left:922px;top:272px;width:65px;text-align:right">-</div>
<div class="t" style="left:992px;top:272px;width:62px;text-align:right">-</div>
<div class="t" style="left:1059px;top:272px;width:43px;text-align:right">-</div>
<div class="t" style="left:1107px;top:272px;width:44px;text-align:right">-</div>
<div style="left:268px;top:295px;width:10px;height:4px;background:#80b4e2;border:1px solid #3f6c98"></div>
<svg style="left:294px;top:294px" width="8" height="9" viewBox="0 0 8 9"><path d="M0 2.800L2.400 5L6.600 0.300L7.200 0.600V3.200L2.600 8.200L0 5.800z" fill="#000"/></svg>
<svg style="left:323px;top:294px" width="8" height="9" viewBox="0 0 8 9"><path d="M0 2.800L2.400 5L6.600 0.300L7.200 0.600V3.200L2.600 8.200L0 5.800z" fill="#000"/></svg>
<div class="t" style="left:349px;top:291px;">R2230</div>
<div class="t" style="left:423px;top:291px;">175/80/16 YOKOHAMA G-015 91S</div>
<div class="t" style="left:789px;top:291px;">шт</div>
<div class="t" style="left:839px;top:290px;width:79px;text-align:right;font-weight:bold;font-size:13px;letter-spacing:-0.6px;word-spacing:3px">4 800,00</div>
<div class="t" style="left:922px;top:291px;width:65px;text-align:right">-</div>
<div class="t" style="left:992px;top:291px;width:62px;text-align:right">12</div>
<div class="t" style="left:1059px;top:291px;width:43px;text-align:right">-</div>
<div class="t" style="left:1107px;top:291px;width:44px;text-align:right">-</div>
<div style="left:268px;top:314px;width:10px;height:4px;background:#80b4e2;border:1px solid #3f6c98"></div>
<svg style="left:294px;top:313px" width="8" height="9" viewBox="0 0 8 9"><path d="M0 2.800L2.400 5L6.600 0.300L7.200 0.600V3.200L2.600 8.200L0 5.800z" fill="#000"/></svg>
<svg style="left:323px;top:313px" width="8" height="9" viewBox="0 0 8 9"><path d="M0 2.800L2.400 5L6.600 0.300L7.200 0.600V3.200L2.600 8.200L0 5.800z" fill="#000"/></svg>
<div class="t" style="left:423px;top:310px;">175/80/16 YOKOHAMA G-073 Q</div>
<div class="t" style="left:789px;top:310px;">шт</div>
<div class="t" style="left:839px;top:309px;width:79px;text-align:right;font-weight:bold;font-size:13px;letter-spacing:-0.6px;word-spacing:3px">4 250,00</div>
<div class="t" style="left:922px;top:310px;width:65px;text-align:right">-</div>
<div class="t" style="left:992px;top:310px;width:62px;text-align:right">-</div>
<div class="t" style="left:1059px;top:310px;width:43px;text-align:right">-</div>
<div class="t" style="left:1107px;top:310px;width:44px;text-align:right">-</div>
<div style="left:268px;top:333px;width:10px;height:4px;background:#80b4e2;border:1px solid #3f6c98"></div>
<svg style="left:294px;top:332px" width="8" height="9" viewBox="0 0 8 9"><path d="M0 2.800L2.400 5L6.600 0.300L7.200 0.600V3.200L2.600 8.200L0 5.800z" fill="#000"/></svg>
<svg style="left:323px;top:332px" width="8" height="9" viewBox="0 0 8 9"><path d="M0 2.800L2.400 5L6.600 0.300L7.200 0.600V3.200L2.600 8.200L0 5.800z" fill="#000"/></svg>
<div class="t" style="left:349px;top:329px;">R1576</div>
<div style="left:419px;top:328px;width:365px;height:18px;background:#5064c4"></div>
<div class="t" style="left:423px;top:329px;color:#fff">175/80/16 YOKOHAMA G-075 91Q</div>
<div class="t" style="left:789px;top:329px;">шт</div>
<div class="t" style="left:839px;top:328px;width:79px;text-align:right;font-weight:bold;font-size:13px;letter-spacing:-0.6px;word-spacing:3px">5 700,00</div>
<div class="t" style="left:922px;top:329px;width:65px;text-align:right">86</div>
<div class="t" style="left:992px;top:329px;width:62px;text-align:right">90</div>
<div class="t" style="left:1059px;top:329px;width:43px;text-align:right">-</div>
<div class="t" style="left:1107px;top:329px;width:44px;text-align:right">-</div>
<div style="left:268px;top:352px;width:10px;height:4px;background:#80b4e2;border:1px solid #3f6c98"></div>
<svg style="left:294px;top:351px" width="8" height="9" viewBox="0 0 8 9"><path d="M0 2.800L2.400 5L6.600 0.300L7.200 0.600V3.200L2.600 8.200L0 5.800z" fill="#000"/></svg>
<svg style="left:323px;top:351px" width="8" height="9" viewBox="0 0 8 9"><path d="M0 2.800L2.400 5L6.600 0.300L7.200 0.600V3.200L2.600 8.200L0 5.800z" fill="#000"/></svg>
<div class="t" style="left:349px;top:348px;">F9430</div>
<div class="t" style="left:423px;top:348px;">185/50/16 YOKOHAMA AE-50 81H</div>
<div class="t" style="left:789px;top:348px;">шт</div>
<div class="t" style="left:922px;top:348px;width:65px;text-align:right">-</div>
<div class="t" style="left:992px;top:348px;width:62px;text-align:right">-</div>
<div class="t" style="left:1059px;top:348px;width:43px;text-align:right">-</div>
<div class="t" style="left:1107px;top:348px;width:44px;text-align:right">-</div>
<div style="left:268px;top:371px;width:10px;height:4px;background:#80b4e2;border:1px solid #3f6c98"></div>
<svg style="left:294px;top:370px" width="8" height="9" viewBox="0 0 8 9"><path d="M0 2.800L2.400 5L6.600 0.300L7.200 0.600V3.200L2.600 8.200L0 5.800z" fill="#000"/></svg>
<svg style="left:323px;top:370px" width="8" height="9" viewBox="0 0 8 9"><path d="M0 2.800L2.400 5L6.600 0.300L7.200 0.600V3.200L2.600 8.200L0 5.800z" fill="#000"/></svg>
<div class="t" style="left:423px;top:367px;">185/55/16 BF GOODRICH G-Grip GO XL V</div>
<div class="t" style="left:789px;top:367px;">шт</div>
<div class="t" style="left:922px;top:367px;width:65px;text-align:right">-</div>
<div class="t" style="left:992px;top:367px;width:62px;text-align:right">-</div>
<div class="t" style="left:1059px;top:367px;width:43px;text-align:right">-</div>
<div class="t" style="left:1107px;top:367px;width:44px;text-align:right">-</div>
<div style="left:268px;top:390px;width:10px;height:4px;background:#80b4e2;border:1px solid #3f6c98"></div>
<svg style="left:294px;top:389px" width="8" height="9" viewBox="0 0 8 9"><path d="M0 2.800L2.400 5L6.600 0.300L7.200 0.600V3.200L2.600 8.200L0 5.800z" fill="#000"/></svg>
<svg style="left:323px;top:389px" width="8" height="9" viewBox="0 0 8 9"><path d="M0 2.800L2.400 5L6.600 0.300L7.200 0.600V3.200L2.600 8.200L0 5.800z" fill="#000"/></svg>
<div class="t" style="left:349px;top:386px;">PSR0L17603</div>
<div class="t" style="left:423px;top:386px;">185/55/16 BRIDGESTONE EP-200 83V</div>
<div class="t" style="left:789px;top:386px;">шт</div>
<div class="t" style="left:922px;top:386px;width:65px;text-align:right">-</div>
<div class="t" style="left:992px;top:386px;width:62px;text-align:right">-</div>
<div class="t" style="left:1059px;top:386px;width:43px;text-align:right">-</div>
<div class="t" style="left:1107px;top:386px;width:44px;text-align:right">-</div>
<div style="left:268px;top:409px;width:10px;height:4px;background:#80b4e2;border:1px solid #3f6c98"></div>
<svg style="left:294px;top:408px" width="8" height="9" viewBox="0 0 8 9"><path d="M0 2.800L2.400 5L6.600 0.300L7.200 0.600V3.200L2.600 8.200L0 5.800z" fill="#000"/></svg>
<svg style="left:323px;top:408px" width="8" height="9" viewBox="0 0 8 9"><path d="M0 2.800L2.400 5L6.600 0.300L7.200 0.600V3.200L2.600 8.200L0 5.800z" fill="#000"/></svg>
<div class="t" style="left:349px;top:405px;">16SI0222</div>
<div class="t" style="left:423px;top:405px;">185/55/16 BRIDGESTONE Revo-2 Q</div>
<div class="t" style="left:789px;top:405px;">шт</div>
<div class="t" style="left:922px;top:405px;width:65px;text-align:right">-</div>
<div class="t" style="left:992px;top:405px;width:62px;text-align:right">-</div>
<div class="t" style="left:1059px;top:405px;width:43px;text-align:right">-</div>
<div class="t" style="left:1107px;top:405px;width:44px;text-align:right">-</div>
<div style="left:268px;top:428px;width:10px;height:4px;background:#80b4e2;border:1px solid #3f6c98"></div>
<svg style="left:294px;top:427px" width="8" height="9" viewBox="0 0 8 9"><path d="M0 2.800L2.400 5L6.600 0.300L7.200 0.600V3.200L2.600 8.200L0 5.800z" fill="#000"/></svg>
<svg style="left:323px;top:427px" width="8" height="9" viewBox="0 0 8 9"><path d="M0 2.800L2.400 5L6.600 0.300L7.200 0.600V3.200L2.600 8.200L0 5.800z" fill="#000"/></svg>
<div class="t" style="left:423px;top:424px;">185/55/16 BRIDGESTONE Revo-GZ S</div>
<div class="t" style="left:789px;top:424px;">шт</div>
<div class="t" style="left:922px;top:424px;width:65px;text-align:right">-</div>
<div class="t" style="left:992px;top:424px;width:62px;text-align:right">-</div>
<div class="t" style="left:1059px;top:424px;width:43px;text-align:right">-</div>
<div class="t" style="left:1107px;top:424px;width:44px;text-align:right">-</div>
<div style="left:268px;top:447px;width:10px;height:4px;background:#80b4e2;border:1px solid #3f6c98"></div>
<svg style="left:294px;top:446px" width="8" height="9" viewBox="0 0 8 9"><path d="M0 2.800L2.400 5L6.600 0.300L7.200 0.600V3.200L2.600 8.200L0 5.800z" fill="#000"/></svg>
<svg style="left:323px;top:446px" width="8" height="9" viewBox="0 0 8 9"><path d="M0 2.800L2.400 5L6.600 0.300L7.200 0.600V3.200L2.600 8.200L0 5.800z" fill="#000"/></svg>
<div class="t" style="left:423px;top:443px;">185/55/16 CONTINENTAL ContiPremiumContact-2 V</div>
<div class="t" style="left:789px;top:443px;">шт</div>
<div class="t" style="left:922px;top:443px;width:65px;text-align:right">-</div>
<div class="t" style="left:992px;top:443px;width:62px;text-align:right">-</div>
<div class="t" style="left:1059px;top:443px;width:43px;text-align:right">-</div>
<div class="t" style="left:1107px;top:443px;width:44px;text-align:right">-</div>
<div style="left:268px;top:466px;width:10px;height:4px;background:#80b4e2;border:1px solid #3f6c98"></div>
<svg style="left:294px;top:465px" width="8" height="9" viewBox="0 0 8 9"><path d="M0 2.800L2.400 5L6.600 0.300L7.200 0.600V3.200L2.600 8.200L0 5.800z" fill="#000"/></svg>
<svg style="left:323px;top:465px" width="8" height="9" viewBox="0 0 8 9"><path d="M0 2.800L2.400 5L6.600 0.300L7.200 0.600V3.200L2.600 8.200L0 5.800z" fill="#000"/></svg>
<div class="t" style="left:423px;top:462px;">185/55/16 CONTINENTAL ContiWinterContact TS-830 T</div>
<div class="t" style="left:789px;top:462px;">шт</div>
<div class="t" style="left:922px;top:462px;width:65px;text-align:right">-</div>
<div class="t" style="left:992px;top:462px;width:62px;text-align:right">-</div>
<div class="t" style="left:1059px;top:462px;width:43px;text-align:right">-</div>
<div class="t" style="left:1107px;top:462px;width:44px;text-align:right">-</div>
<div style="left:268px;top:485px;width:10px;height:4px;background:#80b4e2;border:1px solid #3f6c98"></div>
<svg style="left:294px;top:484px" width="8" height="9" viewBox="0 0 8 9"><path d="M0 2.800L2.400 5L6.600 0.300L7.200 0.600V3.200L2.600 8.200L0 5.800z" fill="#000"/></svg>
<svg style="left:323px;top:484px" width="8" height="9" viewBox="0 0 8 9"><path d="M0 2.800L2.400 5L6.600 0.300L7.200 0.600V3.200L2.600 8.200L0 5.800z" fill="#000"/></svg>
<div class="t" style="left:349px;top:481px;">16SI0001</div>
<div class="t" style="left:423px;top:481px;">185/55/16 DUNLOP GRDS-3 Q</div>
<div class="t" style="left:789px;top:481px;">шт</div>
<div class="t" style="left:922px;top:481px;width:65px;text-align:right">-</div>
<div class="t" style="left:992px;top:481px;width:62px;text-align:right">-</div>
<div class="t" style="left:1059px;top:481px;width:43px;text-align:right">-</div>
<div class="t" style="left:1107px;top:481px;width:44px;text-align:right">-</div>
<div style="left:268px;top:504px;width:10px;height:4px;background:#80b4e2;border:1px solid #3f6c98"></div>
<svg style="left:294px;top:503px" width="8" height="9" viewBox="0 0 8 9"><path d="M0 2.800L2.400 5L6.600 0.300L7.200 0.600V3.200L2.600 8.200L0 5.800z" fill="#000"/></svg>
<svg style="left:323px;top:503px" width="8" height="9" viewBox="0 0 8 9"><path d="M0 2.800L2.400 5L6.600 0.300L7.200 0.600V3.200L2.600 8.200L0 5.800z" fill="#000"/></svg>
<div class="t" style="left:423px;top:500px;">185/55/16 HANKOOK i-Cept W-606 T</div>
<div class="t" style="left:789px;top:500px;">шт</div>
<div class="t" style="left:922px;top:500px;width:65px;text-align:right">-</div>
<div class="t" style="left:992px;top:500px;width:62px;text-align:right">-</div>
<div class="t" style="left:1059px;top:500px;width:43px;text-align:right">-</div>
<div class="t" style="left:1107px;top:500px;width:44px;text-align:right">-</div>
<div style="left:268px;top:523px;width:10px;height:4px;background:#80b4e2;border:1px solid #3f6c98"></div>
<svg style="left:294px;top:522px" width="8" height="9" viewBox="0 0 8 9"><path d="M0 2.800L2.400 5L6.600 0.300L7.200 0.600V3.200L2.600 8.200L0 5.800z" fill="#000"/></svg>
<svg style="left:323px;top:522px" width="8" height="9" viewBox="0 0 8 9"><path d="M0 2.800L2.400 5L6.600 0.300L7.200 0.600V3.200L2.600 8.200L0 5.800z" fill="#000"/></svg>
<div class="t" style="left:423px;top:519px;">185/55/16 HANKOOK Ventus ME-01 K-114 V</div>
<div class="t" style="left:789px;top:519px;">шт</div>
<div class="t" style="left:922px;top:519px;width:65px;text-align:right">-</div>
<div class="t" style="left:992px;top:519px;width:62px;text-align:right">-</div>
<div class="t" style="left:1059px;top:519px;width:43px;text-align:right">-</div>
<div class="t" style="left:1107px;top:519px;width:44px;text-align:right">-</div>
<div style="left:268px;top:542px;width:10px;height:4px;background:#80b4e2;border:1px solid #3f6c98"></div>
<svg style="left:294px;top:541px" width="8" height="9" viewBox="0 0 8 9"><path d="M0 2.800L2.400 5L6.600 0.300L7.200 0.600V3.200L2.600 8.200L0 5.800z" fill="#000"/></svg>
<svg style="left:323px;top:541px" width="8" height="9" viewBox="0 0 8 9"><path d="M0 2.800L2.400 5L6.600 0.300L7.200 0.600V3.200L2.600 8.200L0 5.800z" fill="#000"/></svg>
<div class="t" style="left:349px;top:538px;">14576</div>
<div class="t" style="left:423px;top:538px;">185/55/16 NEXEN Winguard Snow-G WH-2 XL 87T</div>
<div class="t" style="left:789px;top:538px;">шт</div>
<div class="t" style="left:922px;top:538px;width:65px;text-align:right">-</div>
<div class="t" style="left:992px;top:538px;width:62px;text-align:right">-</div>
<div class="t" style="left:1059px;top:538px;width:43px;text-align:right">-</div>
<div class="t" style="left:1107px;top:538px;width:44px;text-align:right">-</div>
<div style="left:268px;top:561px;width:10px;height:4px;background:#80b4e2;border:1px solid #3f6c98"></div>
<svg style="left:294px;top:560px" width="8" height="9" viewBox="0 0 8 9"><path d="M0 2.800L2.400 5L6.600 0.300L7.200 0.600V3.200L2.600 8.200L0 5.800z" fill="#000"/></svg>
<svg style="left:323px;top:560px" width="8" height="9" viewBox="0 0 8 9"><path d="M0 2.800L2.400 5L6.600 0.300L7.200 0.600V3.200L2.600 8.200L0 5.800z" fill="#000"/></svg>
<div class="t" style="left:423px;top:557px;">185/55/16 NORDMAN-4 XL T ошип</div>
<div class="t" style="left:789px;top:557px;">шт</div>
<div class="t" style="left:922px;top:557px;width:65px;text-align:right">-</div>
<div class="t" style="left:992px;top:557px;width:62px;text-align:right">-</div>
<div class="t" style="left:1059px;top:557px;width:43px;text-align:right">-</div>
<div class="t" style="left:1107px;top:557px;width:44px;text-align:right">-</div>
<div style="left:268px;top:580px;width:10px;height:4px;background:#80b4e2;border:1px solid #3f6c98"></div>
<svg style="left:294px;top:579px" width="8" height="9" viewBox="0 0 8 9"><path d="M0 2.800L2.400 5L6.600 0.300L7.200 0.600V3.200L2.600 8.200L0 5.800z" fill="#000"/></svg>
<svg style="left:323px;top:579px" width="8" height="9" viewBox="0 0 8 9"><path d="M0 2.800L2.400 5L6.600 0.300L7.200 0.600V3.200L2.600 8.200L0 5.800z" fill="#000"/></svg>
<div class="t" style="left:423px;top:576px;">185/55/16 SAILUN Atrezzo ELITE XL V</div>
<div class="t" style="left:789px;top:576px;">шт</div>
<div class="t" style="left:922px;top:576px;width:65px;text-align:right">-</div>
<div class="t" style="left:992px;top:576px;width:62px;text-align:right">-</div>
<div class="t" style="left:1059px;top:576px;width:43px;text-align:right">-</div>
<div class="t" style="left:1107px;top:576px;width:44px;text-align:right">-</div>
<div style="left:1154px;top:116px;width:17px;height:481px;background:#faf8ef;border-left:1px solid #cfc8a4"></div>
<div style="left:1155px;top:116px;width:15px;height:20px;background:linear-gradient(90deg,#fffdf6,#ece6c8);border-bottom:1px solid #d6cfae"></div>
<svg style="left:1158px;top:123px" width="9" height="8" viewBox="0 0 9 8"><path d="M4.500 0.500L8.500 7.500H0.500z" fill="#c4c0b0"/></svg>
<div style="left:1155px;top:137px;width:15px;height:16px;background:linear-gradient(90deg,#fffdf6,#ece6c8);border:1px solid #d6cfae"></div>
<div style="left:1160px;top:143px;width:4px;height:4px;border:1px solid #bdb9a5;border-radius:2px"></div>
<div style="left:1155px;top:575px;width:15px;height:21px;background:linear-gradient(90deg,#fffdf6,#ece6c8);border-top:1px solid #cfc8a4"></div>
<svg style="left:1158px;top:583px" width="9" height="7" viewBox="0 0 9 7"><path d="M0.500 0H8.500L4.500 7z" fill="#7a7a7a"/></svg>
<div style="left:1178px;top:133px;width:394px;height:255px;border:1px solid #b9b18b;border-left:none;border-bottom:none;background:#fffbf0"></div>
<div style="left:1179px;top:116px;width:120px;height:18px;"></div>
<div class="tabA" style="left:1178px;top:115px;width:121px;height:19px;line-height:19px">Остатки на складах</div>
<div class="tab" style="left:1305px;top:115px;width:65px;height:18px">Резервы</div>
<div class="tab" style="left:1376px;top:115px;width:90px;height:18px">Изображение</div>
<div style="left:1185px;top:140px;width:380px;height:241px;background:#fff;border:1px solid #dadada"></div>
<div style="left:1186px;top:141px;width:378px;height:20px;background:#f5f2dd"></div>
<div style="left:1186px;top:141px;width:72px;height:20px;background:#c9ccb8"></div>
<div style="left:1186px;top:161px;width:378px;height:1px;background:#dadada"></div>
<div style="left:1186px;top:162px;width:378px;height:18px;background:#ffe4c4"></div>
<div style="left:1186px;top:180px;width:378px;height:1px;background:#dadada"></div>
<div style="left:1186px;top:199px;width:378px;height:1px;background:#dadada"></div>
<div style="left:1186px;top:218px;width:378px;height:1px;background:#dadada"></div>
<div style="left:1258px;top:141px;width:1px;height:78px;background:#dadada"></div>
<div style="left:1400px;top:141px;width:1px;height:78px;background:#dadada"></div>
<div style="left:1478px;top:141px;width:1px;height:78px;background:#dadada"></div>
<div class="t" style="left:1190px;top:141px;font-weight:bold;font-size:13px;letter-spacing:-0.6px">Свободно</div>
<div class="t" style="left:1263px;top:142px;">Склад</div>
<div class="t" style="left:1405px;top:142px;">Характерис...</div>
<div class="t" style="left:1483px;top:141px;font-weight:bold;font-size:13px;letter-spacing:-0.6px">Цена</div>
<div class="t" style="left:1186px;top:163px;width:72px;text-align:center">90</div>
<div class="t" style="left:1186px;top:182px;width:72px;text-align:center">86</div>
<div class="t" style="left:1186px;top:201px;width:72px;text-align:center">4</div>
<div class="t" style="left:1263px;top:182px;">Основной</div>
<div class="t" style="left:1263px;top:201px;">Склад Подкумок</div>
<div class="t" style="left:1479px;top:182px;width:81px;text-align:right">5 015,000</div>
<div class="t" style="left:1479px;top:201px;width:81px;text-align:right">5 015,000</div>
<div style="left:1178px;top:412px;width:394px;height:185px;border:1px solid #b9b18b;border-left:none;border-bottom:none;background:#fffbf0"></div>
<div class="tabA" style="left:1178px;top:394px;width:132px;height:19px;line-height:19px">Заказы поставщикам</div>
<div class="tab" style="left:1316px;top:394px;width:184px;height:18px">Мегапрайс: остатки по прайсам</div>
<div style="left:1185px;top:419px;width:380px;height:171px;background:#fff;border:1px solid #dadada"></div>
<div style="left:1186px;top:420px;width:378px;height:20px;background:#f5f2dd"></div>
<div style="left:1186px;top:420px;width:56px;height:20px;background:#c9ccb8"></div>
<div style="left:1186px;top:440px;width:378px;height:1px;background:#dadada"></div>
<div style="left:1242px;top:420px;width:1px;height:20px;background:#dadada"></div>
<div style="left:1333px;top:420px;width:1px;height:20px;background:#dadada"></div>
<div style="left:1395px;top:420px;width:1px;height:20px;background:#dadada"></div>
<div style="left:1472px;top:420px;width:1px;height:20px;background:#dadada"></div>
<div class="t" style="left:1190px;top:420px;font-weight:bold;font-size:13px;letter-spacing:-0.6px">Количе</div>
<div style="left:1236px;top:433px;width:5px;height:1px;background:#000"></div>
<div class="t" style="left:1246px;top:421px;">Характеристика</div>
<div class="t" style="left:1338px;top:421px;">Дата пос...</div>
<div class="t" style="left:1400px;top:421px;">Склад</div>
<div class="t" style="left:1477px;top:421px;">Заказ постав...</div>
<div class="t" style="left:248px;top:605px;font-weight:bold;font-size:13px;letter-spacing:-0.6px;color:#2a1c00">Контрагент:</div>
<div style="left:326px;top:605px;width:148px;height:19px;background:#fff;border:1px solid #ff8e0c"></div>
<div style="left:428px;top:606px;width:15px;height:17px;background:#f5f2dd;border-left:1px solid #ff8e0c"></div>
<div style="left:432px;top:617px;width:2px;height:2px;background:#b9a65c"></div>
<div style="left:435px;top:617px;width:2px;height:2px;background:#b9a65c"></div>
<div style="left:438px;top:617px;width:2px;height:2px;background:#b9a65c"></div>
<div style="left:443px;top:606px;width:15px;height:17px;background:#f5f2dd;border-left:1px solid #ff8e0c"></div>
<svg style="left:448px;top:611px" width="7" height="7" viewBox="0 0 7 7"><path d="M.7 .7l5.6 5.6M6.300 .7l-5.600 5.600" stroke="#6b4e00" stroke-width="1.500"/></svg>
<div style="left:458px;top:606px;width:15px;height:17px;background:#f5f2dd;border-left:1px solid #ff8e0c"></div>
<svg style="left:462px;top:610px" width="9" height="9" viewBox="0 0 9 9"><circle cx="3.500" cy="3.400" r="3" fill="#f8f5e2" stroke="#8a7836" stroke-width="1.100"/><path d="M5.800 5.800l2.600 2.400" stroke="#85702a" stroke-width="1.600"/></svg>
<div style="left:358px;top:622px;width:30px;height:4px;background:#fff"></div>
<div class="t" style="left:479px;top:605px;font-weight:bold;font-size:13px;letter-spacing:-0.6px;color:#2a1c00">Договор:</div>
<div style="left:551px;top:605px;width:120px;height:19px;background:#fff;border:1px solid #ff8e0c"></div>
<div style="left:625px;top:606px;width:15px;height:17px;background:#f5f2dd;border-left:1px solid #ff8e0c"></div>
<div style="left:629px;top:617px;width:2px;height:2px;background:#b9a65c"></div>
<div style="left:632px;top:617px;width:2px;height:2px;background:#b9a65c"></div>
<div style="left:635px;top:617px;width:2px;height:2px;background:#b9a65c"></div>
<div style="left:640px;top:606px;width:15px;height:17px;background:#f5f2dd;border-left:1px solid #ff8e0c"></div>
<svg style="left:645px;top:611px" width="7" height="7" viewBox="0 0 7 7"><path d="M.7 .7l5.6 5.6M6.300 .7l-5.600 5.600" stroke="#6b4e00" stroke-width="1.500"/></svg>
<div style="left:655px;top:606px;width:15px;height:17px;background:#f5f2dd;border-left:1px solid #ff8e0c"></div>
<svg style="left:659px;top:610px" width="9" height="9" viewBox="0 0 9 9"><circle cx="3.500" cy="3.400" r="3" fill="#f8f5e2" stroke="#8a7836" stroke-width="1.100"/><path d="M5.800 5.800l2.600 2.400" stroke="#85702a" stroke-width="1.600"/></svg>
<div class="t" style="left:555px;top:606px;width:69px;overflow:hidden">Основной Реализация</div>
<div style="left:678px;top:604px;width:200px;height:22px;background:#fff;border-radius:7px"></div>
<div class="t" style="left:880px;top:605px;font-weight:bold;font-size:13px;letter-spacing:-0.6px;color:#2a1c00;text-decoration:underline">Валюта продажи:</div>
<div style="left:993px;top:605px;width:81px;height:19px;background:#fff;border:1px solid #ff8e0c"></div>
<div style="left:1058px;top:606px;width:15px;height:17px;background:#f5f2dd;border-left:1px solid #ff8e0c"></div>
<div style="left:1062px;top:617px;width:2px;height:2px;background:#b9a65c"></div>
<div style="left:1065px;top:617px;width:2px;height:2px;background:#b9a65c"></div>
<div style="left:1068px;top:617px;width:2px;height:2px;background:#b9a65c"></div>
<div class="t" style="left:997px;top:606px;">руб.</div>
<div style="left:248px;top:646px;width:1222px;height:168px;border:1px solid #b9b18b;border-left:none;background:#fffbf0"></div>
<div class="tabA" style="left:248px;top:628px;width:62px;height:19px;line-height:19px">Корзина</div>
<div class="tab" style="left:316px;top:628px;width:349px;height:18px"></div>
<div style="left:314px;top:627px;width:351px;height:18px;background:#fff"></div>
<div class="tab" style="left:671px;top:628px;width:104px;height:18px;line-height:17px">История продаж</div>
<div class="tab" style="left:781px;top:628px;width:123px;height:18px;line-height:17px">Мегапрайс: аналоги</div>
<div style="left:254px;top:653px;width:1209px;height:154px;background:#fff;border:1px solid #dadada"></div>
<div style="left:255px;top:654px;width:1207px;height:20px;background:#f5f2dd"></div>
<div style="left:255px;top:654px;width:35px;height:20px;background:#cdcab4"></div>
<div style="left:255px;top:674px;width:1207px;height:1px;background:#dadada"></div>
<div style="left:255px;top:785px;width:1207px;height:21px;background:#f5f2dd;border-top:1px solid #dadada"></div>
<div style="left:289px;top:654px;width:1px;height:20px;background:#dadada"></div>
<div style="left:289px;top:785px;width:1px;height:21px;background:#dadada"></div>
<div style="left:566px;top:654px;width:1px;height:20px;background:#dadada"></div>
<div style="left:566px;top:785px;width:1px;height:21px;background:#dadada"></div>
<div style="left:688px;top:654px;width:1px;height:20px;background:#dadada"></div>
<div style="left:688px;top:785px;width:1px;height:21px;background:#dadada"></div>
<div style="left:817px;top:654px;width:1px;height:20px;background:#dadada"></div>
<div style="left:817px;top:785px;width:1px;height:21px;background:#dadada"></div>
<div style="left:946px;top:654px;width:1px;height:20px;background:#dadada"></div>
<div style="left:946px;top:785px;width:1px;height:21px;background:#dadada"></div>
<div style="left:1075px;top:654px;width:1px;height:20px;background:#dadada"></div>
<div style="left:1075px;top:785px;width:1px;height:21px;background:#dadada"></div>
<div style="left:1204px;top:654px;width:1px;height:20px;background:#dadada"></div>
<div style="left:1204px;top:785px;width:1px;height:21px;background:#dadada"></div>
<div style="left:1333px;top:654px;width:1px;height:20px;background:#dadada"></div>
<div style="left:1333px;top:785px;width:1px;height:21px;background:#dadada"></div>
<div class="t" style="left:259px;top:655px;">N</div>
<div class="t" style="left:294px;top:655px;">Номенклатура</div>
<div class="t" style="left:571px;top:655px;">Характеристика</div>
<div class="t" style="left:693px;top:655px;">Серия</div>
<div class="t" style="left:822px;top:655px;">Количество</div>
<div class="t" style="left:951px;top:655px;">Цена</div>
<div class="t" style="left:1080px;top:655px;">Сумма</div>
<div class="t" style="left:1209px;top:655px;">Размещение</div>
<div class="t" style="left:1338px;top:655px;">Вес</div>
<div style="left:1475px;top:605px;width:97px;height:19px;background:linear-gradient(#fffbf0,#f7eeda);border:1px solid #982424;border-radius:2px"></div>
<div class="t" style="left:1475px;top:605px;width:97px;text-align:center;font-weight:bold;font-size:13px;letter-spacing:-0.6px;text-decoration:underline;color:#1a1a1a">Новый (F5)</div>
<div style="left:1475px;top:628px;width:97px;height:37px;background:#99ccff;border:1px solid #982424;border-radius:1px"></div>
<div style="left:1475px;top:667px;width:97px;height:37px;background:#99ccff;border:1px solid #982424;border-radius:1px"></div>
<div style="left:1475px;top:706px;width:97px;height:37px;background:#99ccff;border:1px solid #982424;border-radius:1px"></div>
<svg style="left:0;top:0" width="1599" height="864" viewBox="0 0 1599 864"><path d="M1476.800 631.200L1485.800 629.500L1515.300 629.900L1525.800 633.900L1564 634.700L1564.300 656.400L1558.700 658.200L1534.400 659.900L1522.300 662.800L1487.600 662.800L1478.900 659.900L1476.800 657.300z" fill="#fff"/><path d="M1478 669.400L1511.900 668.600L1537.900 671.500L1555.300 675L1564.800 676.400L1564.800 688.500L1559.600 695.100L1522.300 698.100L1504.900 701L1483.200 701L1480.600 694.600L1478 690.300z" fill="#fff"/></svg>
<svg style="left:1479px;top:710px" width="33" height="28" viewBox="0 0 33 28"><defs><linearGradient id="gk" x1="0" y1="0" x2="0" y2="1"><stop offset="0" stop-color="#3aa818"/><stop offset=".55" stop-color="#4cc21c"/><stop offset="1" stop-color="#2f9a14"/></linearGradient></defs><path d="M0 10.500L14.500 24.500L32.500 5.600V9L14.400 27.750L0.300 13.400z" fill="#1d7410"/><path d="M0 10.500L5.900 4.600L14.700 13.400L26.900 0.250L32.500 5.600L14.500 24.500z" fill="url(#gk)"/><path d="M3.500 10.500L6 8L14.700 17L27 3.500" stroke="#7fdc55" stroke-width="1.600" fill="none" opacity=".6"/></svg>
<div class="t" style="left:1522px;top:705px;letter-spacing:0;font-size:29px;line-height:38px;height:38px;color:#000">OK</div>
<div style="left:25px;top:822px;width:12px;height:12px;background:#fff;border:1px solid #9a937a;border-radius:2px"></div>
<svg style="left:27px;top:824px" width="8" height="8" viewBox="0 0 8 8"><path d="M0.800 3.800L3 6.200L7.200 1" stroke="#111" stroke-width="2" fill="none"/></svg>
<div class="t" style="left:39px;top:820px;">Подбор с нескольких складов</div>
<div style="left:206px;top:822px;width:12px;height:12px;background:#fff;border:1px solid #9a937a;border-radius:2px"></div>
<svg style="left:208px;top:824px" width="8" height="8" viewBox="0 0 8 8"><path d="M0.800 3.800L3 6.200L7.200 1" stroke="#111" stroke-width="2" fill="none"/></svg>
<div class="t" style="left:222px;top:820px;">Запрашивать количество</div>
<svg style="left:0;top:0" width="1599" height="864" viewBox="0 0 1599 864"><path d="M794 824Q900 818 1000 823Q1100 817 1200 822Q1300 818 1400 820Q1500 818 1568 826L1566 840L1549 843L1549 846L1447 846L1447 843Q1300 845 1200 843Q1000 846 800 842z" fill="#fff"/></svg>
<div class="t" style="left:1360px;top:850px;letter-spacing:0;font-size:15px;color:#b7b3a2;line-height:20px">Чтобы активировать Windows, пер</div>
</div></body></html>
